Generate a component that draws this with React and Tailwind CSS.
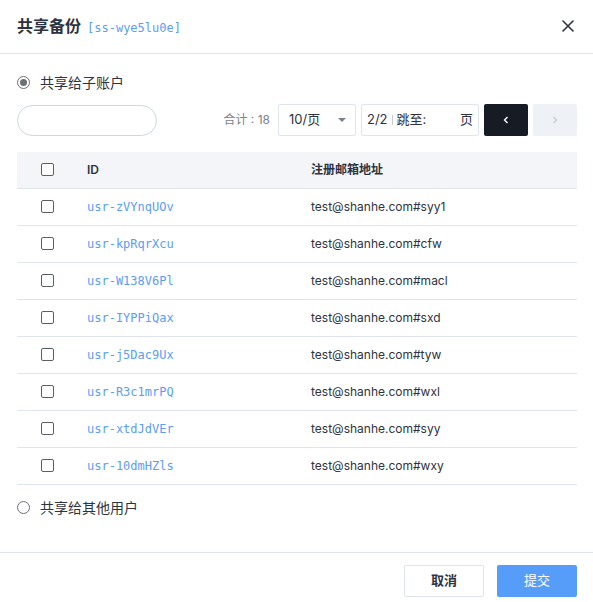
import React from 'react'

const rows = [
  ['usr-zVYnqUOv', 'test@shanhe.com#syy1'],
  ['usr-kpRqrXcu', 'test@shanhe.com#cfw'],
  ['usr-W138V6Pl', 'test@shanhe.com#macl'],
  ['usr-IYPPiQax', 'test@shanhe.com#sxd'],
  ['usr-j5Dac9Ux', 'test@shanhe.com#tyw'],
  ['usr-R3c1mrPQ', 'test@shanhe.com#wxl'],
  ['usr-xtdJdVEr', 'test@shanhe.com#syy'],
  ['usr-10dmHZls', 'test@shanhe.com#wxy'],
]

const sans = "font-['Inter','Noto_Sans_CJK_SC',sans-serif]"
const mono = "font-['DejaVu_Sans_Mono',monospace]"

function Checkbox() {
  return <span className="block w-[13px] h-[13px] rounded-[2px] border border-[#5a5e66] bg-white" />
}

function Radio({ checked }) {
  return (
    <span className="flex items-center justify-center w-[13px] h-[13px] rounded-full border border-[#6b6f76] bg-white">
      {checked && <span className="block w-[7px] h-[7px] rounded-full bg-[#6b6f76]" />}
    </span>
  )
}

export default function App() {
  return (
    <div className={`w-[593px] h-[602px] bg-white text-[#2d3341] ${sans}`}>
      {/* header */}
      <div className="h-[54px] flex items-center justify-between pl-[17px] pr-[19px] border-b border-[#dfe5ec]">
        <div className="flex items-baseline gap-[6px] pb-[1px]">
          <h1 className="text-[16px] font-bold text-[#2d3341]">共享备份</h1>
          <span className={`text-[12px] text-[#5b9cf8] ${mono}`}>[ss-wye5lu0e]</span>
        </div>
        <svg width="12" height="12" viewBox="0 0 12 12" className="mb-[1px]">
          <path d="M1 1L11 11M11 1L1 11" stroke="#2d3341" strokeWidth="1.6" strokeLinecap="round" />
        </svg>
      </div>

      {/* body */}
      <div className="pl-[17px] pr-4 pt-[18px] pb-[34px]">
        <label className="flex items-center gap-[10px] h-5">
          <Radio checked />
          <span className="text-[14px] text-[#2d3341]">共享给子账户</span>
        </label>

        <div className="flex items-center mt-[12px] h-[32px]">
          <input className="w-[140px] h-[31px] rounded-full border border-[#cfd7e2] outline-none px-3 text-[12px]" />
          <div className="ml-auto flex items-center h-[32px]">
            <span className="text-[12px] text-[#7b818b] mr-2">合计 : 18</span>
            <div className="w-[78px] h-[32px] border border-[#dfe5ec] rounded-[2px] flex items-center pl-[10px] pr-[9px] text-[13px] text-[#2d3341]">
              10/页
              <svg width="8" height="4" viewBox="0 0 8 4" className="ml-auto">
                <path d="M0 0H8L4 4Z" fill="#7b818b" />
              </svg>
            </div>
            <div className="ml-[5px] w-[118px] h-[32px] border border-[#dfe5ec] rounded-[2px] flex items-center pl-[5px] pr-[5px] text-[13px] text-[#2d3341]">
              <span>2/2</span>
              <span className="mx-[4px] w-px h-[10px] bg-[#c5cbd3]" />
              <span>跳至:</span>
              <span className="ml-auto">页</span>
            </div>
            <button className="ml-[5px] w-[44px] h-[32px] rounded-[2px] bg-[#161b24] flex items-center justify-center">
              <svg width="6" height="8" viewBox="0 0 6 8">
                <path d="M4.5 1L1.5 4L4.5 7" fill="none" stroke="#ffffff" strokeWidth="1.4" />
              </svg>
            </button>
            <button className="ml-[5px] w-[44px] h-[32px] rounded-[2px] bg-[#eef1f6] flex items-center justify-center">
              <svg width="6" height="8" viewBox="0 0 6 8">
                <path d="M1.5 1L4.5 4L1.5 7" fill="none" stroke="#c5cbd3" strokeWidth="1.2" />
              </svg>
            </button>
          </div>
        </div>

        <table className="w-full mt-[16px] border-collapse">
          <thead>
            <tr className="h-[36px] bg-[#f4f5f9] border-b border-[#dfe5ec]">
              <th className="w-[70px] pl-[24px] text-left"><Checkbox /></th>
              <th className="w-[224px] text-left text-[12px] font-semibold text-[#2d3341]">ID</th>
              <th className="text-left text-[12px] font-semibold text-[#2d3341]">注册邮箱地址</th>
            </tr>
          </thead>
          <tbody>
            {rows.map(([id, email]) => (
              <tr key={id} className="h-[37px] border-b border-[#dfe5ec]">
                <td className="pl-[24px]"><Checkbox /></td>
                <td className={`text-[12px] text-[#5b9cf8] ${mono}`}>{id}</td>
                <td className="text-[12px] text-[#2d3341]">{email}</td>
              </tr>
            ))}
          </tbody>
        </table>

        <label className="flex items-center gap-[10px] h-5 mt-[13px]">
          <Radio />
          <span className="text-[14px] text-[#2d3341]">共享给其他用户</span>
        </label>
      </div>

      {/* footer */}
      <div className="border-t border-[#dfe5ec] flex justify-end gap-[13px] pr-4 pt-3">
        <button className="w-[80px] h-[32px] rounded-[2px] border border-[#dfe5ec] bg-white text-[13px] font-semibold text-[#2d3341]">取消</button>
        <button className="w-[80px] h-[32px] rounded-[2px] bg-[#559df8] text-[13px] text-white">提交</button>
      </div>
    </div>
  )
}
